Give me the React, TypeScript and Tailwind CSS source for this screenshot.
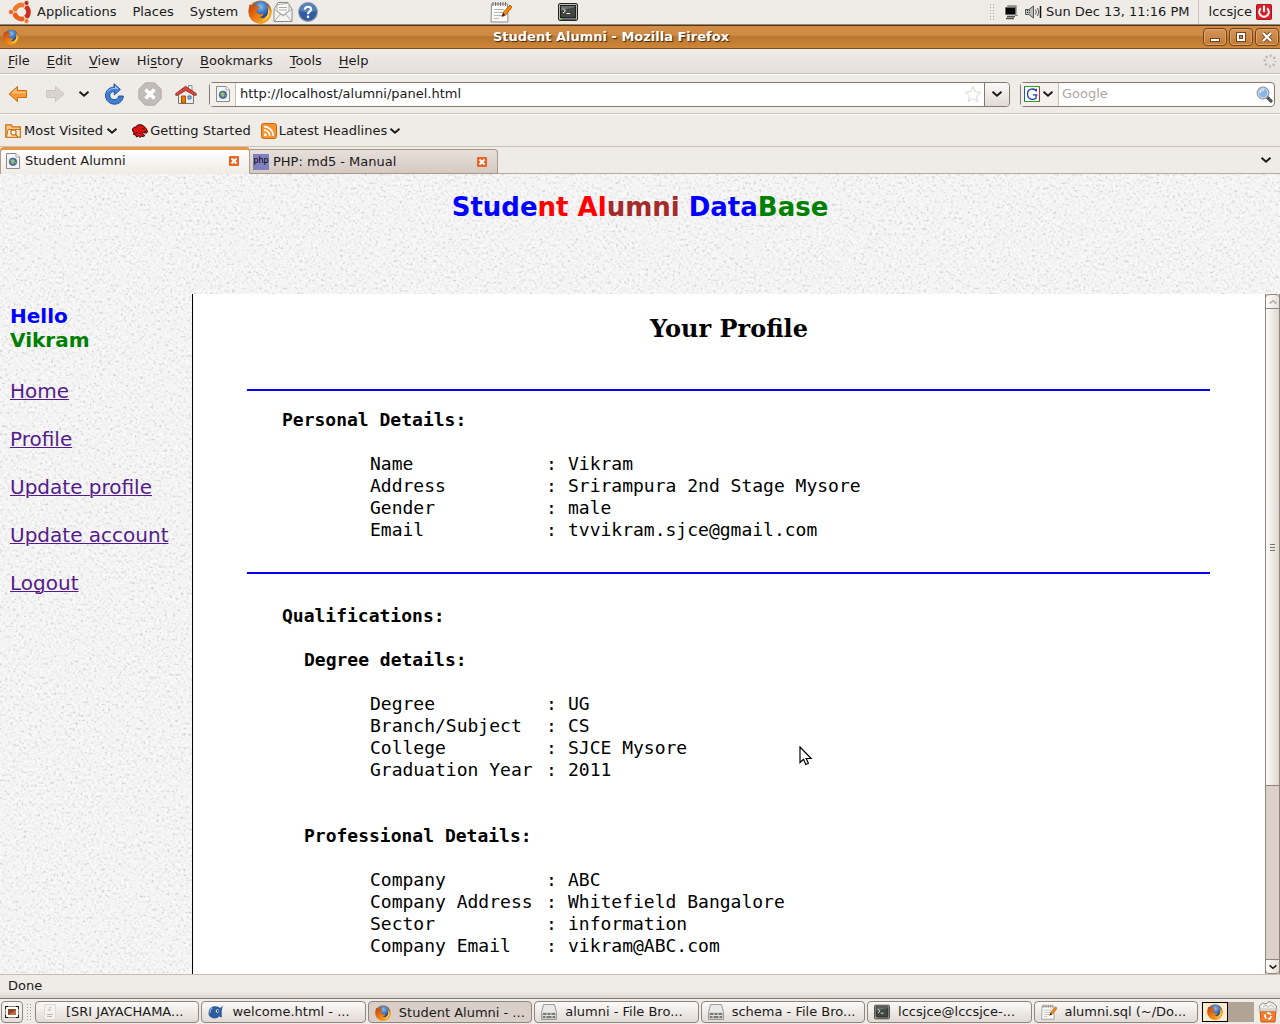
import type { ReactNode } from "react";
import { Fragment } from "react";

type IconProps = { className?: string };

/* ---------- icons ---------- */

function UbuntuIcon() {
  return (
    <svg viewBox="0 0 24 24" className="size-6 shrink-0" aria-hidden="true">
      <g fill="none" strokeWidth="4.600">
        <path d="M6.500 12A7 7 0 0 1 17 5.940" stroke="#ee7a2c" />
        <path d="M17 5.940A7 7 0 0 1 17 18.060" stroke="#c9301c" />
        <path d="M17 18.060A7 7 0 0 1 6.500 12" stroke="#e9601f" />
      </g>
      <path d="M13.500 12H4M13.500 12l5-8.660M13.500 12l5 8.660" stroke="#efebe7" strokeWidth="1.200" />
      <circle cx="3" cy="12" r="2.500" fill="#e9601f" stroke="#efebe7" strokeWidth=".8" />
      <circle cx="18.500" cy="3" r="2.500" fill="#c22a18" stroke="#efebe7" strokeWidth=".8" />
      <circle cx="18.500" cy="21" r="2.500" fill="#ee7a2c" stroke="#efebe7" strokeWidth=".8" />
    </svg>
  );
}

function FirefoxIcon({ className = "size-4" }: IconProps) {
  return (
    <svg viewBox="0 0 24 24" className={className} aria-hidden="true">
      <defs>
        <radialGradient id="ffGlobe" cx="0.5" cy="0.3" r="0.7">
          <stop offset="0" stopColor="#7fc4f0" />
          <stop offset="0.6" stopColor="#2a5cae" />
          <stop offset="1" stopColor="#142d6b" />
        </radialGradient>
        <linearGradient id="ffFox" x1="0" y1="0" x2="1" y2="1">
          <stop offset="0" stopColor="#c43c0c" />
          <stop offset="0.5" stopColor="#ee7c12" />
          <stop offset="1" stopColor="#f9c22a" />
        </linearGradient>
      </defs>
      <circle cx="12" cy="12" r="11.5" fill="#e5730f" />
      <circle cx="12.6" cy="10.6" r="9.6" fill="url(#ffGlobe)" />
      <path
        d="M1.6 4.2 4.4 6 8 4.8 9.6 6.2 12 7 9.8 9.4 8 10.6 9.4 13.2 13 14.4 15.6 13 14.4 16 11.4 17.4 15.4 18 18.8 15.8 20.2 12.4 20 8.6 18 4.4 21.4 7.6 23.4 11.4 22.6 16.6 19.4 21 14.6 23.4 9.4 23.2 4.6 20.6 1.2 16 .6 10z"
        fill="url(#ffFox)"
      />
      <path d="M20.2 8.6 21.8 12 20.8 16.4 17.6 19.8 13.4 21.2 17.4 18.6 20 14z" fill="#fbe04a" />
    </svg>
  );
}

function MailIcon() {
  return (
    <svg viewBox="0 0 22 24" className="h-6 w-[22px]" aria-hidden="true">
      <path d="M2 9 5 4.500 6 2.500H16L17 4.500 20 9v12.500H2z" fill="#f4f4f2" stroke="#8b8c88" />
      <path d="M5 11V4.500l12-1V11l-6 4z" fill="#fff" stroke="#a9aaa6" />
      <path d="M2 9l9 7 9-7M2 21.500l6.500-7.500M20 21.500L13.500 14M7 7.500h8M7 10h8" fill="none" stroke="#a9aaa6" />
    </svg>
  );
}

function HelpIcon() {
  return (
    <svg viewBox="0 0 22 22" className="size-5" aria-hidden="true">
      <circle cx="11" cy="11" r="10.300" fill="#2f5d9f" stroke="#8d9aae" strokeWidth="1.2" />
      <path d="M2 10a9 9 0 0 1 18 0c-5 2-12 2-18 0z" fill="#5580ba" />
      <path d="M7.600 8.400C7.800 4.200 14.600 4.300 14.400 8.200 14.300 10.400 11 10.400 11 13.400" fill="none" stroke="#fff" strokeWidth="2.400" />
      <rect x="9.800" y="15" width="2.500" height="2.500" fill="#fff" />
    </svg>
  );
}

function NotepadIcon({ className = "size-4" }: IconProps) {
  return (
    <svg viewBox="0 0 22 22" className={className} aria-hidden="true">
      <path d="M1.500 3h16l.5 18H1z" fill="#fbfbfa" stroke="#8b8c88" />
      <path d="M3 1v4M5.500 1v4M8 1v4M10.500 1v4M13 1v4M15.500 1v4" stroke="#77736e" />
      <path d="M4 8.500h10M4 11.500h9M4 14.500h8M4 17.500h5" stroke="#b5b5b2" />
      <path d="M12 15.500 13.500 11 20 4l2.200 2-6.700 8.200z" fill="#f58a0f" stroke="#a84b06" strokeWidth=".8" />
      <path d="M12 15.500 13.200 12 15 14z" fill="#1b1b1b" />
    </svg>
  );
}

function TerminalIcon({ className = "size-4" }: IconProps) {
  return (
    <svg viewBox="0 0 20 18" className={className} aria-hidden="true">
      <rect x=".5" y=".5" width="19" height="17" rx="1.500" fill="#b9bbb7" stroke="#242624" />
      <rect x="2.500" y="2.500" width="15" height="12" fill="#414743" stroke="#222" />
      <path d="M3 7.500 17 4V3H3z" fill="#68706a" />
      <path d="M5 5.500 7.500 8 5 10M8.500 10.500H12" fill="none" stroke="#fff" />
      <rect x="2" y="15.300" width="16" height="1.700" fill="#5a5e5a" />
      <rect x="2" y="15.300" width="2" height="1.500" fill="#79c93a" />
    </svg>
  );
}

function NetworkIcon() {
  return (
    <svg viewBox="0 0 16 16" className="size-4" aria-hidden="true">
      <path d="M4.500 1.500h9v7h-9z" fill="#8f8f8a" stroke="#a3a39e" />
      <path d="M2.500 3.500h10v7h-10z" fill="#070707" stroke="#6a6a66" />
      <path d="M4 12.500h8M3 14.500h8" stroke="#52524e" strokeWidth="1.500" />
      <path d="M12 11.500h3M13 9v3" stroke="#888" />
    </svg>
  );
}

function SpeakerIcon() {
  return (
    <svg viewBox="0 0 17 16" className="h-4 w-[17px]" aria-hidden="true">
      <path d="M.5 5.500h3.500L8.500 2v12L4 10.500H.5z" fill="#bbbbb7" stroke="#555" />
      <path d="M2.500 6v4M4.500 6v4" stroke="#333" strokeDasharray="1 1" />
      <path d="M10.500 5.500q1.500 2.500 0 5M12.500 4q2.500 4 0 8" fill="none" stroke="#555" />
      <path d="M15.500 2v12" stroke="#111" strokeWidth="1.500" />
    </svg>
  );
}

function PowerIcon() {
  return (
    <svg viewBox="0 0 16 16" className="size-4" aria-hidden="true">
      <rect x=".5" y=".5" width="15" height="15" rx="1" fill="#d8232c" stroke="#b51019" />
      <path d="M4.900 4.300a4.800 4.800 0 1 0 6.200 0" fill="none" stroke="#fff" strokeWidth="1.900" />
      <path d="M8 1.500v6.500" stroke="#fff" strokeWidth="2" />
    </svg>
  );
}

function BackIcon() {
  return (
    <svg viewBox="0 0 20 18" className="h-[18px] w-5" aria-hidden="true">
      <path d="M1 9 9.500 1.500v4H18.500v7H9.500v4z" fill="#f79a36" stroke="#cf6a0a" strokeLinejoin="round" />
      <path d="M3 8.500 8.500 3.500v3h9v2z" fill="#fcbd73" />
    </svg>
  );
}

function ForwardIcon() {
  return (
    <svg viewBox="0 0 20 18" className="h-[18px] w-5" aria-hidden="true">
      <path d="M19 9 10.500 1.500v4H1.500v7h9v4z" fill="#d9d4cf" stroke="#cbc5bf" strokeLinejoin="round" />
    </svg>
  );
}

function ReloadIcon() {
  return (
    <svg viewBox="0 0 20 22" className="h-[22px] w-5" aria-hidden="true">
      <path
        d="M10 4.200V.8l6.500 5.700L10.300 12V8.600C7 8.600 5.600 10.600 5.800 12.800c.3 3.600 5 5 7.600 2.600.7-.7 1-1.300 1.200-2.400h4.700c-.1 4.500-3.800 8.200-8.600 8.200-5 0-9-3.600-9.200-8.200C1.300 8 5 4.200 10 4.200z"
        fill="#3f7fd3"
        stroke="#1d4a94"
        strokeWidth=".9"
      />
      <path d="M11 2.800 14.800 6.300 11 5.800C6 5.500 3 8.500 2.700 12 2.500 7.500 6 5 11 5z" fill="#a9cbf3" />
    </svg>
  );
}

function StopIcon() {
  return (
    <svg viewBox="0 0 24 24" className="size-6" aria-hidden="true">
      <path d="M7.300.8h9.400l6.500 6.500v9.400l-6.500 6.500H7.300L.8 16.700V7.300z" fill="#c1bbb9" stroke="#b5aeac" />
      <path d="M7.500 7.500l9 9M16.500 7.500l-9 9" stroke="#fff" strokeWidth="3.800" />
    </svg>
  );
}

function HomeIcon() {
  return (
    <svg viewBox="0 0 22 21" className="h-[21px] w-[22px]" aria-hidden="true">
      <path d="M13.500 1.500h3.500v6h-3.500z" fill="#f4f4f2" stroke="#8a8a86" />
      <path d="M3.500 9.500 11 4.500l7.500 5v10h-15z" fill="#efeeec" stroke="#777" />
      <path d="M0.800 9.500 10.500 2.300 21.200 9.500v1.800h-2L10.700 6.500 2.500 11.300H.8z" fill="#d84642" stroke="#8f1e1c" strokeWidth=".8" />
      <path d="M6.500 12h4v7h-4z" fill="#f57900" stroke="#a34f00" />
      <path d="M13 12h3v3h-3z" fill="#8fc3ee" stroke="#3c6fa3" />
    </svg>
  );
}

function PageIcon() {
  return (
    <svg viewBox="0 0 14 16" className="h-4 w-3.5 shrink-0" aria-hidden="true">
      <path d="M.5.5h9.500l3.500 3.500v11.500H.5z" fill="#f5f5f3" stroke="#8b8c88" />
      <path d="M10 .5V4h3.500" fill="#fff" stroke="#a5a6a2" />
      <circle cx="7" cy="8.800" r="3.800" fill="#4a6fa8" stroke="#3d5a88" strokeWidth=".7" />
      <path d="M4.300 7.500 6.500 6 8.800 7.500 8 10.500 6 11zM9 9.500l1.300-.6-.8 2.200z" fill="#9bc268" />
    </svg>
  );
}

function Chevron({ className = "h-2 w-3" }: IconProps) {
  return (
    <svg viewBox="0 0 12 8" className={className} aria-hidden="true">
      <path d="M1.500 1.800 6 5.800l4.500-4" fill="none" stroke="currentColor" strokeWidth="1.900" />
    </svg>
  );
}

function StarIcon() {
  return (
    <svg viewBox="0 0 18 18" className="size-[18px]" aria-hidden="true">
      <path d="M9 1.500l2.200 5.200 5.600.5-4.300 3.700 1.300 5.500L9 13.500l-4.800 2.900 1.300-5.500L1.200 7.200l5.600-.5z" fill="#fff" stroke="#dcd7d2" />
    </svg>
  );
}

function GoogleIcon() {
  return (
    <svg viewBox="0 0 16 16" className="size-4" aria-hidden="true">
      <rect width="16" height="16" fill="#fff" />
      <path d="M0 .5h16" stroke="#36a327" />
      <path d="M.5 1v15" stroke="#2550c8" />
      <path d="M0 15.500h16" stroke="#36a327" />
      <path d="M15.500 1v14" stroke="#c92b1d" />
      <path d="M12.300 5.500V2.800M12.300 4.800C10 1.800 3.500 2.500 3.500 8c0 5.800 6 6.300 8.500 4.200V9M9 8.900h4.500" fill="none" stroke="#1c3fae" strokeWidth="1.300" />
    </svg>
  );
}

function SearchIcon() {
  return (
    <svg viewBox="0 0 17 17" className="size-[17px]" aria-hidden="true">
      <path d="M11 11 15 15" stroke="#555753" strokeWidth="3.200" strokeLinecap="round" />
      <circle cx="7" cy="7" r="5.800" fill="#8ab5e8" stroke="#8f9398" strokeWidth="1.200" />
      <circle cx="7" cy="7" r="4.800" fill="none" stroke="#dfe9f5" strokeWidth=".8" />
      <path d="M4 7A3.200 3.200 0 0 1 8 4" fill="none" stroke="#e8f2fd" strokeWidth="1.300" />
    </svg>
  );
}

function SpinnerIcon() {
  return (
    <svg viewBox="0 0 14 14" className="size-3.5" aria-hidden="true">
      <circle cx="7" cy="7" r="5.200" fill="none" stroke="#b7b1ab" strokeWidth="2.600" strokeDasharray="1.700 2.384" strokeDashoffset=".85" />
    </svg>
  );
}

function FolderSearchIcon() {
  return (
    <svg viewBox="0 0 16 16" className="size-4" aria-hidden="true">
      <path d="M.8 14.200V1.800h5.500l1 2h7.900v10.400z" fill="#fbc98f" stroke="#d16f0e" strokeWidth="1.300" />
      <path d="M3 6.500h12.200v7.700H1.500z" fill="#fdeedd" stroke="#d16f0e" />
      <circle cx="8.500" cy="9.500" r="2.600" fill="#fff" stroke="#d16f0e" strokeWidth="1.200" />
      <path d="M10.500 11.500l2.500 2.500" stroke="#d16f0e" strokeWidth="1.500" />
    </svg>
  );
}

function MozillaIcon() {
  return (
    <svg viewBox="0 0 16 14" className="h-3.5 w-4" aria-hidden="true">
      <path d="M.5 5 2 3.200 4 3 5.500 1 9 .6l3 1.600L14.500 5 15.600 8l-1.400 1.300-3-.8-.7 1.500 2.500 1.500-1.500 1-2.200-.2-1 1.200L6.500 12l-2 1-.8-2L1.500 10.500 2 8.500.8 7.500z" fill="#df0f0f" stroke="#1d0202" strokeWidth=".9" />
      <path d="M10 4.500l1.500.3M12.500 7.500l1.500.2M3.500 9.500l2-1.500M7.500 10l1-2" stroke="#200" />
    </svg>
  );
}

function FeedIcon() {
  return (
    <svg viewBox="0 0 16 16" className="size-4" aria-hidden="true">
      <rect x=".5" y=".5" width="15" height="15" rx="2" fill="#f6932f" stroke="#d0690b" />
      <circle cx="4.300" cy="11.700" r="1.500" fill="#fff" />
      <path d="M3 7.200A5.800 5.800 0 0 1 8.800 13M3 3.700A9.300 9.300 0 0 1 12.300 13" fill="none" stroke="#fff" strokeWidth="1.700" />
    </svg>
  );
}

function CloseTabIcon() {
  return (
    <svg viewBox="0 0 10 10" className="size-2.5" aria-hidden="true">
      <rect width="10" height="10" rx="1" fill="#ec6222" />
      <path d="M2.500 2.500l5 5M7.500 2.500l-5 5" stroke="#fff" strokeWidth="2" />
    </svg>
  );
}

function DesktopIcon() {
  return (
    <svg viewBox="0 0 14 12" className="h-3 w-3.5" aria-hidden="true">
      <rect x=".5" y=".5" width="13" height="11" fill="#fff" stroke="#8a8682" />
      <path d="M.5 3V.5H3M11 .5h2.500V3M13.500 9v2.500H11M3 11.500H.5V9" fill="none" stroke="#111" />
      <rect x="3" y="3" width="8" height="6" fill="#8c4623" />
      <path d="M3 9 11 4v5z" fill="#b8714c" />
    </svg>
  );
}

function DocumentIcon() {
  return (
    <svg viewBox="0 0 16 16" className="size-4" aria-hidden="true">
      <path d="M2.500.5h11v15h-11z" fill="#f4f3f1" stroke="#dedbd8" />
      <path d="M7 4.500l2-1.500M6 6h3M5 10.500h6M5 12.500h5" stroke="#b8b5b2" />
    </svg>
  );
}

function BluefishIcon() {
  return (
    <svg viewBox="0 0 16 14" className="h-3.5 w-4" aria-hidden="true">
      <path d="M15.500.5c-2 2-2 8-1.500 12l-3-1C9 14.500 2.500 14 .8 10 0 6 1.500 2.500 5 1.500c3-.8 5.500.3 7 1.500z" fill="#2e5d9d" />
      <path d="M4.500 3C2.500 4 1.800 6 2.200 8" fill="none" stroke="#8fb3dd" strokeWidth="1.300" />
      <circle cx="9.500" cy="6" r="1.800" fill="#dbe6f3" />
      <circle cx="9.800" cy="6" r=".9" fill="#17284a" />
    </svg>
  );
}

function DriveIcon() {
  return (
    <svg viewBox="0 0 16 16" className="size-4" aria-hidden="true">
      <path d="M2.500.5h11l2 8v7H.5v-7z" fill="#e9e9e8" stroke="#9b9b98" />
      <path d="M1 8.500h14v6.500H1z" fill="#c7c7c4" />
      <path d="M2 9h12v5H2z" fill="#777976" />
      <path d="M2 11.500h12M6 9v2M10 9v2M5 12v2M11 12v2" stroke="#e1e1df" />
    </svg>
  );
}

function TrashIcon() {
  return (
    <svg viewBox="0 0 20 22" className="h-[22px] w-5 shrink-0" aria-hidden="true">
      <path d="M2 8.500 1.500 5 4.500 2 8 3l3-2.500 4 1.500 3.500 3-.5 3.500z" fill="#f2f2f0" stroke="#898a86" />
      <path d="M5 6l3-2 2 2.500 3-3 3 3" fill="none" stroke="#b2b3af" />
      <path d="M2 8.500h16l-1 12.500H3z" fill="#f17c2c" stroke="#cf5a10" />
      <path d="M1 8h18v2H1z" fill="#e4e3e1" stroke="#999" strokeWidth=".5" />
      <circle cx="10" cy="15" r="3" fill="none" stroke="#fff" strokeWidth="1.700" strokeDasharray="4.600 1.683" />
    </svg>
  );
}

function PointerIcon() {
  return (
    <svg viewBox="0 0 14 20" className="h-5 w-3.5" aria-hidden="true">
      <path d="M1 1v15.500l3.500-3.300L6.800 18.500l2.600-1.200-2.200-4.800h5z" fill="#fff" stroke="#000" strokeWidth="1.200" />
    </svg>
  );
}

function PaperTexture() {
  return (
    <svg className="absolute inset-0 size-full" aria-hidden="true">
      <filter id="paper" x="0" y="0" width="100%" height="100%" colorInterpolationFilters="sRGB">
        <feTurbulence type="fractalNoise" baseFrequency="0.37" numOctaves="3" seed="7" />
        <feColorMatrix values="1.700 0 0 0 -0.35  1.700 0 0 0 -0.35  1.700 0 0 0 -0.35  0 0 0 0 1" />
        <feComponentTransfer>
          <feFuncR type="table" tableValues="0.83 0.92 0.95 0.965 0.975 0.985" />
          <feFuncG type="table" tableValues="0.83 0.92 0.95 0.965 0.975 0.985" />
          <feFuncB type="table" tableValues="0.83 0.92 0.95 0.965 0.975 0.985" />
        </feComponentTransfer>
      </filter>
      <rect width="100%" height="100%" filter="url(#paper)" />
    </svg>
  );
}

/* ---------- desktop chrome ---------- */

function Grip() {
  return <span className="h-[18px] w-1.5 bg-[radial-gradient(#aaa39c_1px,transparent_1px)] bg-[size:3px_3px]" aria-hidden="true" />;
}

function TopPanel() {
  return (
    <header className="flex h-[25px] shrink-0 items-center border-b border-[#8f897b] bg-[#efebe7] pr-2 pl-2">
      <nav className="flex items-center">
        <UbuntuIcon />
        <button className="pr-2 pl-[5px]">Applications</button>
        <button className="px-2">Places</button>
        <button className="px-2">System</button>
      </nav>
      <button className="ml-0.5" aria-label="Firefox"><FirefoxIcon className="size-6" /></button>
      <button aria-label="Mail"><MailIcon /></button>
      <button className="ml-1" aria-label="Help"><HelpIcon /></button>
      <button className="ml-[172px]" aria-label="Text editor"><NotepadIcon className="size-[22px]" /></button>
      <button className="ml-[46px]" aria-label="Terminal"><TerminalIcon className="h-[18px] w-5" /></button>
      <div className="ml-auto flex items-center">
        <Grip />
        <span className="ml-2"><NetworkIcon /></span>
        <span className="mr-1 ml-1.5"><SpeakerIcon /></span>
        <time>Sun Dec 13, 11:16 PM</time>
        <span className="mr-2.5 ml-2 h-6 border-l border-[#cdc5bc]" />
        <button className="flex items-center gap-1">lccsjce<PowerIcon /></button>
      </div>
    </header>
  );
}

function WindowButton({ label, children }: { label: string; children: ReactNode }) {
  return (
    <button aria-label={label} className="flex h-[18px] w-6 items-center justify-center rounded-sm border border-[#70431a] bg-linear-to-b from-[#d8955a] to-[#c07a33] shadow-[inset_0_0_0_1px_#dda670]">
      <svg viewBox="0 0 12 12" className="size-3" aria-hidden="true">{children}</svg>
    </button>
  );
}

function TitleBar() {
  return (
    <div className="flex h-6 shrink-0 items-center gap-0.5 border-t border-b border-t-[#5a3512] border-b-[#7d4d1e] bg-linear-to-b from-[#d08b45] from-40% via-[#b87730] via-50% to-[#cf8637] pr-px pl-[3px]">
      <FirefoxIcon />
      <h1 className="flex-1 text-center font-bold text-white [text-shadow:1px_1px_1px_#3c2208]">Student Alumni - Mozilla Firefox</h1>
      <WindowButton label="Minimize"><rect x="1.500" y="7.500" width="9" height="3" fill="#fff" stroke="#70431a" /></WindowButton>
      <WindowButton label="Maximize">
        <rect x="3" y="3" width="6" height="6" fill="none" stroke="#70431a" strokeWidth="4" />
        <rect x="3" y="3" width="6" height="6" fill="none" stroke="#fff" strokeWidth="2" />
      </WindowButton>
      <WindowButton label="Close">
        <path d="M2 2l8 8M10 2l-8 8" stroke="#70431a" strokeWidth="4" />
        <path d="M2 2l8 8M10 2l-8 8" stroke="#fff" strokeWidth="2.400" />
      </WindowButton>
    </div>
  );
}

const menus = [
  ["", "F", "ile"],
  ["", "E", "dit"],
  ["", "V", "iew"],
  ["Hi", "s", "tory"],
  ["", "B", "ookmarks"],
  ["", "T", "ools"],
  ["", "H", "elp"],
];

function MenuBar() {
  return (
    <nav className="flex h-[25px] shrink-0 items-center gap-px border-b border-[#c9c1b8] bg-linear-to-b from-[#efebe7] to-[#e6e0db] pr-[3px]">
      {menus.map(([before, key, after]) => (
        <button key={key + after} className="px-2">
          {before}
          <span className="underline underline-offset-2">{key}</span>
          {after}
        </button>
      ))}
      <span className="ml-auto"><SpinnerIcon /></span>
    </nav>
  );
}

function NavBar() {
  return (
    <div className="flex h-10 shrink-0 items-center border-t border-b border-t-white border-b-[#c9c1b8] pr-[5px] pl-2">
      <button aria-label="Back"><BackIcon /></button>
      <button className="ml-[17px]" aria-label="Forward"><ForwardIcon /></button>
      <button className="ml-[13px]" aria-label="History"><Chevron /></button>
      <button className="ml-3.5" aria-label="Reload"><ReloadIcon /></button>
      <button className="ml-3.5" aria-label="Stop"><StopIcon /></button>
      <button className="ml-[13px]" aria-label="Home"><HomeIcon /></button>
      <div className="ml-3 flex h-[25px] flex-1 items-center rounded-sm border border-[#85786e] bg-white">
        <span className="flex h-full w-[26px] items-center justify-center border-r border-[#c9bfb6] bg-[#f3f0ed]"><PageIcon /></span>
        <input aria-label="Address" defaultValue="http://localhost/alumni/panel.html" className="min-w-0 flex-1 bg-transparent px-1 outline-none" />
        <button className="mr-0.5" aria-label="Bookmark this page"><StarIcon /></button>
        <button className="flex h-full w-[25px] items-center justify-center rounded-r-sm border-l border-[#85786e] bg-linear-to-b from-[#fbfaf9] to-[#e2dad4]" aria-label="Show history"><Chevron /></button>
      </div>
      <div className="ml-2.5 flex h-[25px] w-[255px] items-center rounded-sm border border-[#85786e] bg-white">
        <button className="flex h-full w-[38px] items-center gap-0.5 border-r border-[#c9bfb6] bg-[#f3f0ed] pl-[3px]" aria-label="Search engine"><GoogleIcon /><Chevron /></button>
        <input aria-label="Search" placeholder="Google" className="min-w-0 flex-1 px-[3px] outline-none placeholder:text-[#b0a79e]" />
        <button className="mr-px" aria-label="Search"><SearchIcon /></button>
      </div>
    </div>
  );
}

function BookmarksBar() {
  return (
    <nav className="flex h-[33px] shrink-0 items-center border-t border-b border-t-white border-b-[#c9c1b8] pl-[5px]">
      <button className="flex items-center gap-[3px]"><FolderSearchIcon />Most Visited<Chevron /></button>
      <button className="ml-3.5 flex items-center gap-0.5"><MozillaIcon />Getting Started</button>
      <button className="ml-2.5 flex items-center gap-0.5"><FeedIcon />Latest Headlines<Chevron /></button>
    </nav>
  );
}

function TabBar() {
  return (
    <div role="tablist" className="flex h-[27px] shrink-0 items-end">
      <div className="flex h-[27px] w-[250px] items-center rounded-t-sm border-x border-t-3 border-x-[#b09c8c] border-t-[#e9963f] bg-linear-to-b from-white to-[#efebe6] pr-2.5 pb-0.5 pl-[5px]">
        <button role="tab" aria-selected="true" className="flex flex-1 items-center gap-[5px]"><PageIcon />Student Alumni</button>
        <button aria-label="Close Student Alumni"><CloseTabIcon /></button>
      </div>
      <div className="flex h-[25px] w-[248px] items-center rounded-tr-sm border-t border-r border-b border-[#a8988c] bg-linear-to-b from-[#e6dfda] to-[#d5cac2] pr-2.5 pl-[3px]">
        <button role="tab" aria-selected="false" className="flex flex-1 items-center gap-1">
          <span className="flex h-4 w-4 justify-center bg-[#8080bf] text-[8px] leading-[14px] text-black">php</span>
          PHP: md5 - Manual
        </button>
        <button aria-label="Close PHP: md5 - Manual"><CloseTabIcon /></button>
      </div>
      <div className="flex h-[27px] flex-1 items-center justify-end border-b border-[#b5aaa0] pr-2">
        <button aria-label="List all tabs"><Chevron /></button>
      </div>
    </div>
  );
}

/* ---------- web page ---------- */

const personal = [
  ["Name", "Vikram"],
  ["Address", "Srirampura 2nd Stage Mysore"],
  ["Gender", "male"],
  ["Email", "tvvikram.sjce@gmail.com"],
];
const degree = [
  ["Degree", "UG"],
  ["Branch/Subject", "CS"],
  ["College", "SJCE Mysore"],
  ["Graduation Year", "2011"],
];
const professional = [
  ["Company", "ABC"],
  ["Company Address", "Whitefield Bangalore"],
  ["Sector", "information"],
  ["Company Email", "vikram@ABC.com"],
];

function Details({ rows }: { rows: string[][] }) {
  return (
    <dl className="mt-[22px] ml-[88px] grid grid-cols-[176px_22px_1fr]">
      {rows.map(([name, value]) => (
        <Fragment key={name}>
          <dt className="col-start-1">{name}</dt>
          <dd className="col-start-2">:</dd>
          <dd className="col-start-3">{value}</dd>
        </Fragment>
      ))}
    </dl>
  );
}

function Scrollbar() {
  return (
    <div className="flex w-[15px] shrink-0 flex-col border-x border-[#8f857d] bg-[#dbd1ca]" aria-hidden="true">
      <div className="flex h-[15px] items-center justify-center rounded-t-sm border-y border-[#8f857d] bg-linear-to-r from-white to-[#e6dfd9] text-[#b5aca4]"><Chevron className="h-1.5 w-2.5 rotate-180" /></div>
      <div className="flex flex-[477] flex-col items-center justify-center gap-0.5 border-b border-[#8f857d] bg-linear-to-r from-[#fdfcfb] to-[#dfd8d1]">
        <span className="h-px w-[5px] bg-[#7a706a]" />
        <span className="h-px w-[5px] bg-[#7a706a]" />
        <span className="h-px w-[5px] bg-[#7a706a]" />
      </div>
      <div className="flex-[173]" />
      <div className="flex h-[15px] items-center justify-center rounded-b-sm border-y border-[#8f857d] bg-linear-to-r from-white to-[#e6dfd9]"><Chevron className="h-1.5 w-2.5" /></div>
    </div>
  );
}

function WebPage() {
  return (
    <main className="relative flex min-h-0 flex-1 flex-col bg-[#f4f4f4]">
      <PaperTexture />
      <h2 className="relative h-[120px] shrink-0 pt-4 text-center text-[26px] leading-[34px] font-bold text-[#0000ff]">
        Stude<span className="text-[#ff0000]">nt Al</span><span className="text-[#a52a2a]">umni</span> Data<span className="text-[#008000]">Base</span>
      </h2>
      <div className="relative flex min-h-0 flex-1">
        <aside className="w-[193px] shrink-0 border-r border-black pt-2.5 pl-2.5 text-xl leading-6">
          <p className="font-bold text-[#0000ff]">Hello<br /><span className="text-[#008000]">Vikram</span></p>
          <nav className="mt-[27px] flex flex-col items-start gap-6 text-[#551a8b]">
            {["Home", "Profile", "Update profile", "Update account", "Logout"].map((item) => (
              <a key={item} href="#" className="underline decoration-1">{item}</a>
            ))}
          </nav>
        </aside>
        <article className="min-w-0 flex-1 overflow-hidden bg-white font-['DejaVu_Sans_Mono',monospace] text-lg leading-[22px] text-black">
          <h2 className="pt-5 text-center font-['DejaVu_Serif',serif] text-2xl leading-[30px] font-bold">Your Profile</h2>
          <hr className="mt-[45px] mr-[55px] ml-[54px] border-t-2 border-[#0000ff]" />
          <section className="mt-[18px] ml-[89px]">
            <h3 className="font-bold">Personal Details:</h3>
            <Details rows={personal} />
          </section>
          <hr className="mt-[31px] mr-[55px] ml-[54px] border-t-2 border-[#0000ff]" />
          <section className="mt-[31px] ml-[89px]">
            <h3 className="font-bold">Qualifications:</h3>
            <h4 className="mt-[22px] ml-[22px] font-bold">Degree details:</h4>
            <Details rows={degree} />
            <h4 className="mt-11 ml-[22px] font-bold">Professional Details:</h4>
            <Details rows={professional} />
          </section>
        </article>
        <Scrollbar />
      </div>
      <span className="absolute top-[572px] left-[799px]"><PointerIcon /></span>
    </main>
  );
}

/* ---------- bottom panel ---------- */

const tasks = [
  { icon: <DocumentIcon />, text: "[SRI JAYACHAMA..." },
  { icon: <BluefishIcon />, text: "welcome.html - ..." },
  { icon: <FirefoxIcon />, text: "Student Alumni - ...", active: true },
  { icon: <DriveIcon />, text: "alumni - File Bro..." },
  { icon: <DriveIcon />, text: "schema - File Bro..." },
  { icon: <TerminalIcon />, text: "lccsjce@lccsjce-..." },
  { icon: <NotepadIcon />, text: "alumni.sql (~/Do..." },
];

function Taskbar() {
  return (
    <footer className="flex h-[26px] shrink-0 items-center gap-0.5 border-t border-[#85786e] bg-[#efebe7] pr-0.5 pl-px">
      <button aria-label="Show desktop" className="flex h-[22px] w-[22px] items-center justify-center rounded-sm border border-[#8f857d] bg-linear-to-b from-[#fbfaf9] to-[#e5ded8]"><DesktopIcon /></button>
      <span className="mx-px flex"><Grip /></span>
      {tasks.map(({ icon, text, active }) => (
        <button
          key={text}
          className={`flex h-[22px] min-w-0 flex-1 items-center rounded-sm border border-[#8f857d] pl-1.5 whitespace-nowrap ${active ? "bg-[#d9cfc8] pt-0.5" : "bg-linear-to-b from-[#fbfaf9] to-[#e2dad4]"}`}
        >
          <span className="mr-2 flex w-4 shrink-0">{icon}</span>
          {text}
        </button>
      ))}
      <div className="mx-0.5 flex h-5 w-[52px] bg-[#b1a496]">
        <button aria-label="Workspace 1" className="flex w-[26px] items-center justify-center border border-black bg-[#fdecd0]"><FirefoxIcon /></button>
        <button aria-label="Workspace 2" className="flex-1" />
      </div>
      <button aria-label="Trash"><TrashIcon /></button>
    </footer>
  );
}

export default function App() {
  return (
    <div className="flex h-screen flex-col overflow-hidden bg-[#efebe7] font-['DejaVu_Sans',sans-serif] text-[13px] leading-4 whitespace-nowrap text-[#1a1a1a]">
      <TopPanel />
      <TitleBar />
      <MenuBar />
      <NavBar />
      <BookmarksBar />
      <TabBar />
      <WebPage />
      <div role="status" className="flex h-6 shrink-0 items-center border-t border-[#c9bcb0] bg-linear-to-b from-[#efebe7] from-70% to-[#dcd6d1] pb-0.5 pl-2">Done</div>
      <Taskbar />
    </div>
  );
}
